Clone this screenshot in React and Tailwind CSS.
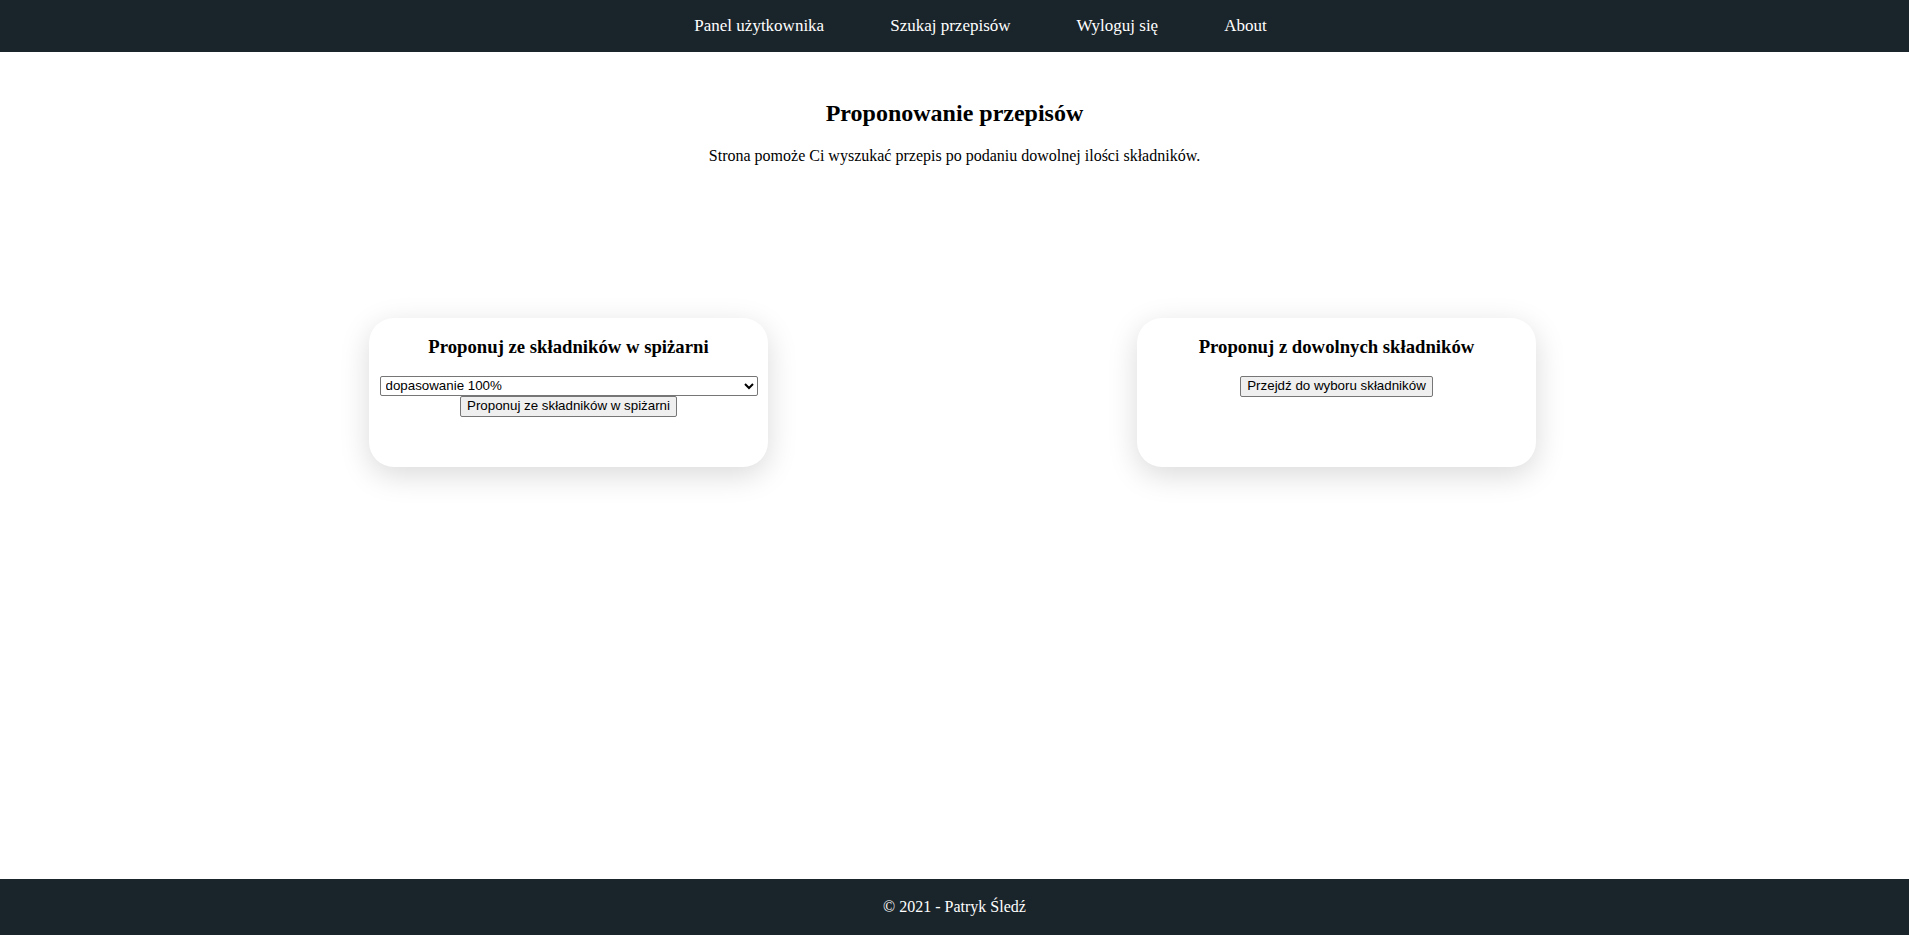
const navItems = ['Panel użytkownika', 'Szukaj przepisów', 'Wyloguj się', 'About'];

const serif = { fontFamily: '"Liberation Serif", "Times New Roman", serif' };

const controlCls =
  "font-['Liberation_Sans',Arial,sans-serif] text-[13.33px] text-black border border-[#767676] rounded-[2px]";

const Card = ({ title, children }) => (
  <div className="w-[399px] h-[149px] bg-white rounded-[25px] shadow-[0_8px_30px_rgba(0,0,0,0.15)] flex flex-col items-center">
    <h3 className="text-[18.72px] font-bold leading-[1.15] mt-[18px] mb-[18px]">{title}</h3>
    {children}
  </div>
);

export default function App() {
  return (
    <div className="min-h-screen flex flex-col bg-white text-black" style={serif}>
      <nav className="h-[52px] bg-[#1a252b] flex items-center justify-center">
        <ul className="flex pl-[52px]">
          {navItems.map((item) => (
            <li key={item}>
              <a href="#" className="px-[33px] text-[17px] text-white">
                {item}
              </a>
            </li>
          ))}
        </ul>
      </nav>

      <main className="flex-1 flex flex-col items-center">
        <h2 className="mt-[48px] text-[24px] font-bold leading-[1.15]">Proponowanie przepisów</h2>
        <p className="mt-[19px] text-[16px] leading-[1.15]">
          Strona pomoże Ci wyszukać przepis po podaniu dowolnej ilości składników.
        </p>

        <div className="w-full flex justify-evenly pr-1 mt-[153px]">
          <Card title="Proponuj ze składników w spiżarni">
            <select className={`${controlCls} w-[378px] h-[20px] bg-white pl-[1px]`} defaultValue="100">
              <option value="100">dopasowanie 100%</option>
              <option value="75">dopasowanie 75%</option>
              <option value="50">dopasowanie 50%</option>
            </select>
            <button type="button" className={`${controlCls} bg-[#efefef] px-[6px] h-[21px] leading-none`}>
              Proponuj ze składników w spiżarni
            </button>
          </Card>
          <Card title="Proponuj z dowolnych składników">
            <button type="button" className={`${controlCls} bg-[#efefef] px-[6px] h-[21px] leading-none`}>
              Przejdź do wyboru składników
            </button>
          </Card>
        </div>
      </main>

      <footer className="h-[56px] bg-[#1a252b] flex items-center justify-center">
        <p className="text-[16px] text-white">© 2021 - Patryk Śledź</p>
      </footer>
    </div>
  );
}
